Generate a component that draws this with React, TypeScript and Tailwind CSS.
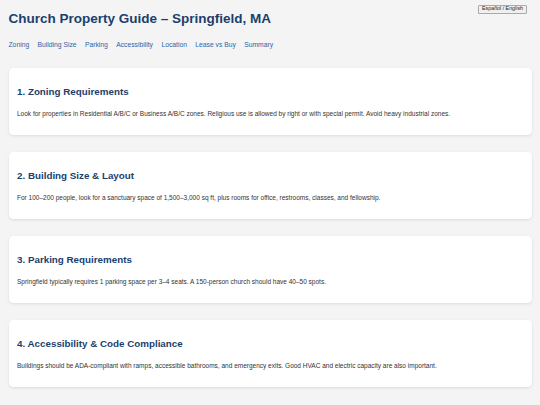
import React from "react";

const links = ["Zoning", "Building Size", "Parking", "Accessibility", "Location", "Lease vs Buy", "Summary"];

const sections = [
  {
    title: "1. Zoning Requirements",
    body: "Look for properties in Residential A/B/C or Business A/B/C zones. Religious use is allowed by right or with special permit. Avoid heavy industrial zones.",
  },
  {
    title: "2. Building Size & Layout",
    body: "For 100–200 people, look for a sanctuary space of 1,500–3,000 sq ft, plus rooms for office, restrooms, classes, and fellowship.",
  },
  {
    title: "3. Parking Requirements",
    body: "Springfield typically requires 1 parking space per 3–4 seats. A 150-person church should have 40–50 spots.",
  },
  {
    title: "4. Accessibility & Code Compliance",
    body: "Buildings should be ADA-compliant with ramps, accessible bathrooms, and emergency exits. Good HVAC and electric capacity are also important.",
  },
];

function Section({ title, body }: { title: string; body: string }) {
  return (
    <section className="bg-white rounded-[4.5px] shadow-[0_1px_3px_rgba(0,0,0,0.1)] pt-[17px] pb-[15.5px] px-[8.5px]">
      <h2 className="text-[9.8px] leading-[14px] font-bold text-[#1b3f6d]">{title}</h2>
      <p className="mt-[10px] text-[6.5px] leading-[10px] text-[#333]">{body}</p>
    </section>
  );
}

export default function App() {
  return (
    <div className="relative min-h-screen bg-[#f4f4f4] font-['Liberation_Sans',Arial,sans-serif] px-[8.5px] pt-[11px] pb-[17px]">
      <button className="absolute top-[4.5px] right-[13px] h-[9px] px-[3px] text-[5.3px] leading-none text-[#222] bg-[#efefef] border border-[#aaa] rounded-[1px]">
        Español / English
      </button>
      <h1 className="text-[13.5px] leading-[16px] font-bold text-[#1b3f6d]">Church Property Guide – Springfield, MA</h1>
      <nav className="mt-[12.5px] flex gap-[8.4px] text-[6.75px] leading-[9px] text-[#2f64a8]">
        {links.map((l) => (
          <a key={l} href={`#${l.toLowerCase().replace(/ /g, "-")}`}>{l}</a>
        ))}
      </nav>
      <div className="mt-[19.5px] flex flex-col gap-[17.5px]">
        {sections.map((s) => (
          <Section key={s.title} title={s.title} body={s.body} />
        ))}
      </div>
    </div>
  );
}
